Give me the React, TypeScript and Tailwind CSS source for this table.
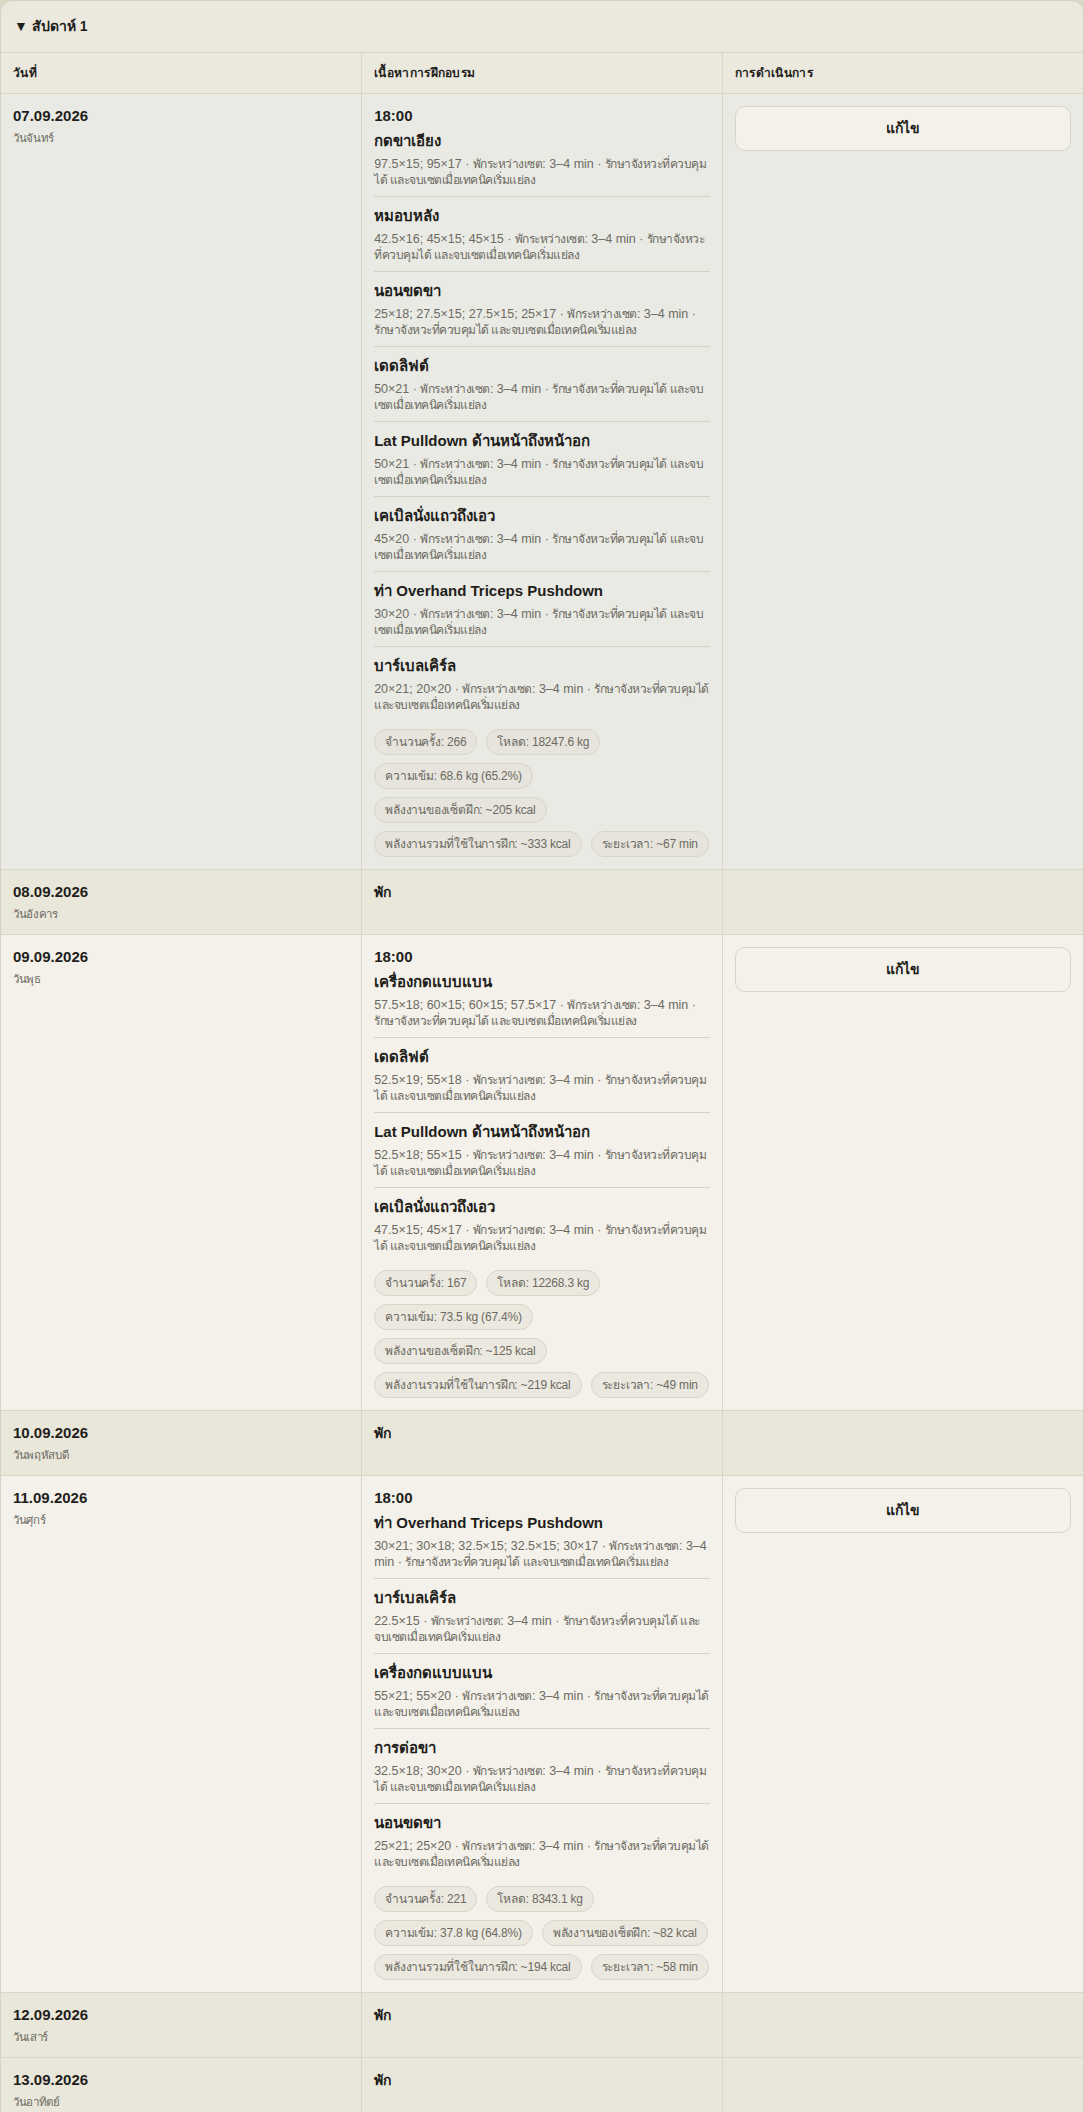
import React from "react";

interface Exercise {
  name: string;
  sets: string;
}

interface Day {
  date: string;
  weekday: string;
  time?: string;
  exercises?: Exercise[];
  stats?: string[];
  hover?: boolean;
}

const days: Day[] = [
  {
    date: "07.09.2026",
    weekday: "วันจันทร์",
    time: "18:00",
    hover: true,
    exercises: [
      { name: "กดขาเอียง", sets: "97.5×15; 95×17" },
      { name: "หมอบหลัง", sets: "42.5×16; 45×15; 45×15" },
      { name: "นอนขดขา", sets: "25×18; 27.5×15; 27.5×15; 25×17" },
      { name: "เดดลิฟต์", sets: "50×21" },
      { name: "Lat Pulldown ด้านหน้าถึงหน้าอก", sets: "50×21" },
      { name: "เคเบิลนั่งแถวถึงเอว", sets: "45×20" },
      { name: "ท่า Overhand Triceps Pushdown", sets: "30×20" },
      { name: "บาร์เบลเคิร์ล", sets: "20×21; 20×20" },
    ],
    stats: [
      "จำนวนครั้ง: 266",
      "โหลด: 18247.6 kg",
      "ความเข้ม: 68.6 kg (65.2%)",
      "พลังงานของเซ็ตฝึก: ~205 kcal",
      "พลังงานรวมที่ใช้ในการฝึก: ~333 kcal",
      "ระยะเวลา: ~67 min",
    ],
  },
  { date: "08.09.2026", weekday: "วันอังคาร" },
  {
    date: "09.09.2026",
    weekday: "วันพุธ",
    time: "18:00",
    exercises: [
      { name: "เครื่องกดแบบแบน", sets: "57.5×18; 60×15; 60×15; 57.5×17" },
      { name: "เดดลิฟต์", sets: "52.5×19; 55×18" },
      { name: "Lat Pulldown ด้านหน้าถึงหน้าอก", sets: "52.5×18; 55×15" },
      { name: "เคเบิลนั่งแถวถึงเอว", sets: "47.5×15; 45×17" },
    ],
    stats: [
      "จำนวนครั้ง: 167",
      "โหลด: 12268.3 kg",
      "ความเข้ม: 73.5 kg (67.4%)",
      "พลังงานของเซ็ตฝึก: ~125 kcal",
      "พลังงานรวมที่ใช้ในการฝึก: ~219 kcal",
      "ระยะเวลา: ~49 min",
    ],
  },
  { date: "10.09.2026", weekday: "วันพฤหัสบดี" },
  {
    date: "11.09.2026",
    weekday: "วันศุกร์",
    time: "18:00",
    exercises: [
      { name: "ท่า Overhand Triceps Pushdown", sets: "30×21; 30×18; 32.5×15; 32.5×15; 30×17" },
      { name: "บาร์เบลเคิร์ล", sets: "22.5×15" },
      { name: "เครื่องกดแบบแบน", sets: "55×21; 55×20" },
      { name: "การต่อขา", sets: "32.5×18; 30×20" },
      { name: "นอนขดขา", sets: "25×21; 25×20" },
    ],
    stats: [
      "จำนวนครั้ง: 221",
      "โหลด: 8343.1 kg",
      "ความเข้ม: 37.8 kg (64.8%)",
      "พลังงานของเซ็ตฝึก: ~82 kcal",
      "พลังงานรวมที่ใช้ในการฝึก: ~194 kcal",
      "ระยะเวลา: ~58 min",
    ],
  },
  { date: "12.09.2026", weekday: "วันเสาร์" },
  { date: "13.09.2026", weekday: "วันอาทิตย์" },
];

// Thai runs are set a touch tighter than the latin numbers
const thai = "text-[12px] tracking-[-0.5px]";

export default function App() {
  return (
    <div className="min-h-screen bg-[#dcd8c6] font-['Liberation_Sans',Arial,sans-serif] text-[#1f1e1b]">
      <div className="overflow-hidden rounded-[12px] border border-[#d6d2c2] bg-[#ebe8de]">
        <div className="flex h-[52px] items-center border-b border-[#d9d5c7] px-[13px] text-[14px] font-bold">
          ▼ สัปดาห์ 1
        </div>
        <table className="w-full table-fixed border-collapse">
          <thead>
            <tr className="bg-[#ebe8de] text-left text-[12px] font-bold tracking-wide">
              <th className="border-b border-[#d9d5c7] px-3 py-3 leading-4">วันที่</th>
              <th className="border-b border-l border-[#d9d5c7] px-3 py-3 leading-4">เนื้อหาการฝึกอบรม</th>
              <th className="border-b border-l border-[#d9d5c7] px-3 py-3 leading-4">การดำเนินการ</th>
            </tr>
          </thead>
          <tbody>
            {days.map((day) => (
              <DayRow key={day.date} day={day} />
            ))}
          </tbody>
        </table>
      </div>
    </div>
  );
}

function DayRow({ day }: { day: Day }) {
  const rest = !day.exercises;
  const bg = rest ? "bg-[#e9e6da]" : day.hover ? "bg-[#eaeae5]" : "bg-[#f3f1ea]";

  return (
    <tr className={`${bg} align-top`}>
      <td className="border-t border-[#d9d5c7] px-3 py-3">
        <div className="text-[15px] font-bold leading-5">{day.date}</div>
        <div className="mt-1 text-[11.5px] leading-4 tracking-[-0.35px] text-[#6d6a62]">{day.weekday}</div>
      </td>
      <td className="border-l border-t border-[#d9d5c7] px-3 py-3">
        {rest ? (
          <div className="text-[14px] font-bold leading-5">พัก</div>
        ) : (
          <>
            <div className="text-[15px] font-bold leading-5">{day.time}</div>
            {day.exercises!.map((ex, i) => {
              const last = i === day.exercises!.length - 1;
              return (
                <div
                  key={i}
                  className={`${i === 0 ? "pt-1" : "pt-2"} pb-2 ${last ? "" : "border-b border-[#d6d2c4]"}`}
                >
                  <div className="text-[15px] font-bold leading-[22px]">{ex.name}</div>
                  <div className="mt-1 text-[12.5px] leading-4 text-[#6d6a62]">
                    {ex.sets} · <span className={thai}>พักระหว่างเซต</span>: 3–4 min ·{" "}
                    <span className={thai}>รักษาจังหวะที่ควบคุมได้ และจบเซตเมื่อเทคนิคเริ่มแย่ลง</span>
                  </div>
                </div>
              );
            })}
            <div className="mt-2 flex flex-wrap gap-x-[9px] gap-y-2">
              {day.stats!.map((s) => (
                <span
                  key={s}
                  className={`flex h-[26px] items-center rounded-full border border-[#d9d4c4] px-2.5 text-[12px] tracking-[-0.2px] text-[#6d6a62] ${
                    day.hover ? "bg-[#e6e4dc]" : "bg-[#ebe8df]"
                  }`}
                >
                  {s}
                </span>
              ))}
            </div>
          </>
        )}
      </td>
      <td className="border-l border-t border-[#d9d5c7] px-3 py-3">
        {!rest && (
          <button className="h-[45px] w-full rounded-[10px] border border-[#d8d4c6] bg-[#f3f1e9] text-[14px] font-bold text-[#1f1e1b]">
            แก้ไข
          </button>
        )}
      </td>
    </tr>
  );
}
